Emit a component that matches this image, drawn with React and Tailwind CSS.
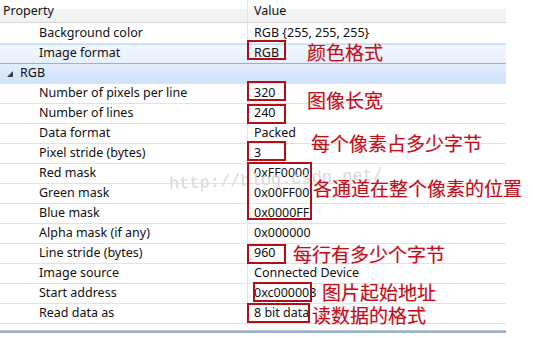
const rows = [
  { name: 'Background color', value: 'RGB {255, 255, 255}' },
  { name: 'Image format', value: 'RGB', selected: true },
  { name: 'RGB', group: true },
  { name: 'Number of pixels per line', value: '320' },
  { name: 'Number of lines', value: '240' },
  { name: 'Data format', value: 'Packed' },
  { name: 'Pixel stride (bytes)', value: '3' },
  { name: 'Red mask', value: '0xFF0000' },
  { name: 'Green mask', value: '0x00FF00' },
  { name: 'Blue mask', value: '0x0000FF' },
  { name: 'Alpha mask (if any)', value: '0x000000' },
  { name: 'Line stride (bytes)', value: '960' },
  { name: 'Image source', value: 'Connected Device' },
  { name: 'Start address', value: '0xc000008' },
  { name: 'Read data as', value: '8 bit data' },
];

// red boxes drawn over the values
const boxes = [
  { l: 247, t: 40, w: 39, h: 20 },
  { l: 247, t: 81, w: 39, h: 20 },
  { l: 247, t: 104, w: 39, h: 20 },
  { l: 247, t: 141, w: 39, h: 20 },
  { l: 247, t: 162, w: 65, h: 58 },
  { l: 247, t: 244, w: 39, h: 20 },
  { l: 253, t: 282, w: 59, h: 20 },
  { l: 247, t: 303, w: 63, h: 20 },
];

const notes = [
  { l: 307, t: 41, text: '颜色格式' },
  { l: 307, t: 89, text: '图像长宽' },
  { l: 311, t: 132, text: '每个像素占多少字节' },
  { l: 313, t: 177, text: '各通道在整个像素的位置' },
  { l: 293, t: 243, text: '每行有多少个字节' },
  { l: 322, t: 281, text: '图片起始地址' },
  { l: 312, t: 304, text: '读数据的格式' },
];

function Row({ row, first }) {
  let rowCls = 'border-b border-[#e3e3e3] bg-white';
  if (row.selected) rowCls = 'border-b border-[#8db2e3] bg-[linear-gradient(to_bottom,#f3f8fe,#e6effc)] shadow-[inset_0_1px_0_#c6dcf6]';
  if (row.group) rowCls = 'border-b border-[#e0e0e0] bg-[linear-gradient(to_bottom,#e3eefd,#d0e2fa)]';
  return (
    <div className={`flex ${first ? 'h-[21px]' : 'h-[20px]'} ${rowCls}`}>
      <div className={`w-[248px] flex items-center border-r ${row.group || row.selected ? 'border-transparent' : 'border-[#e3e3e3]'} ${row.group ? 'pl-[7px]' : 'pl-[39px]'}`}>
        {row.group && (
          <svg width="6" height="6" viewBox="0 0 6 6" className="mr-[7px] mt-[1px]">
            <path d="M6 0 L6 6 L0 6 Z" fill="#404040" />
          </svg>
        )}
        <span>{row.name}</span>
      </div>
      <div className="flex-1 flex items-center pl-[6px]">{row.value}</div>
    </div>
  );
}

export default function App() {
  return (
    <div className="relative w-[533px] h-[338px] bg-white overflow-hidden text-[12.5px] text-[#111111] font-['Noto_Sans',sans-serif]">
      <div className="w-[506px]">
        <div className="flex h-[23px] border-b border-[#d5d5d5] bg-[linear-gradient(to_bottom,#ffffff_40%,#f3f3f3_40%)]">
          <div className="w-[248px] flex items-center pl-[3px] border-r border-[#e3e3e3]">Property</div>
          <div className="flex-1 flex items-center pl-[6px]">Value</div>
        </div>
        {rows.map((r, i) => (
          <Row key={r.name} row={r} first={i === 0} />
        ))}
        <div className="h-[6px]"></div>
        <div className="h-[3px] bg-[#9aafc9] border-t border-[#b9c8da]"></div>
      </div>

      {/* watermark */}
      <div className="absolute left-[169px] top-[176px] -rotate-[2.5deg] origin-left text-[17px] text-[#d9d9d9] font-['Liberation_Mono',monospace] leading-none pointer-events-none">
        http://blog.csdn.net/
      </div>

      {boxes.map((b, i) => (
        <div
          key={i}
          className="absolute border-2 border-[#b40f17]"
          style={{ left: b.l, top: b.t, width: b.w, height: b.h }}
        />
      ))}

      {notes.map((n, i) => (
        <div
          key={i}
          className="absolute text-[19px] leading-[22px] text-[#c0101a] font-['Noto_Sans_CJK_SC',sans-serif] [text-shadow:0_0_1px_#f0a0b0]"
          style={{ left: n.l, top: n.t }}
        >
          {n.text}
        </div>
      ))}
    </div>
  );
}
